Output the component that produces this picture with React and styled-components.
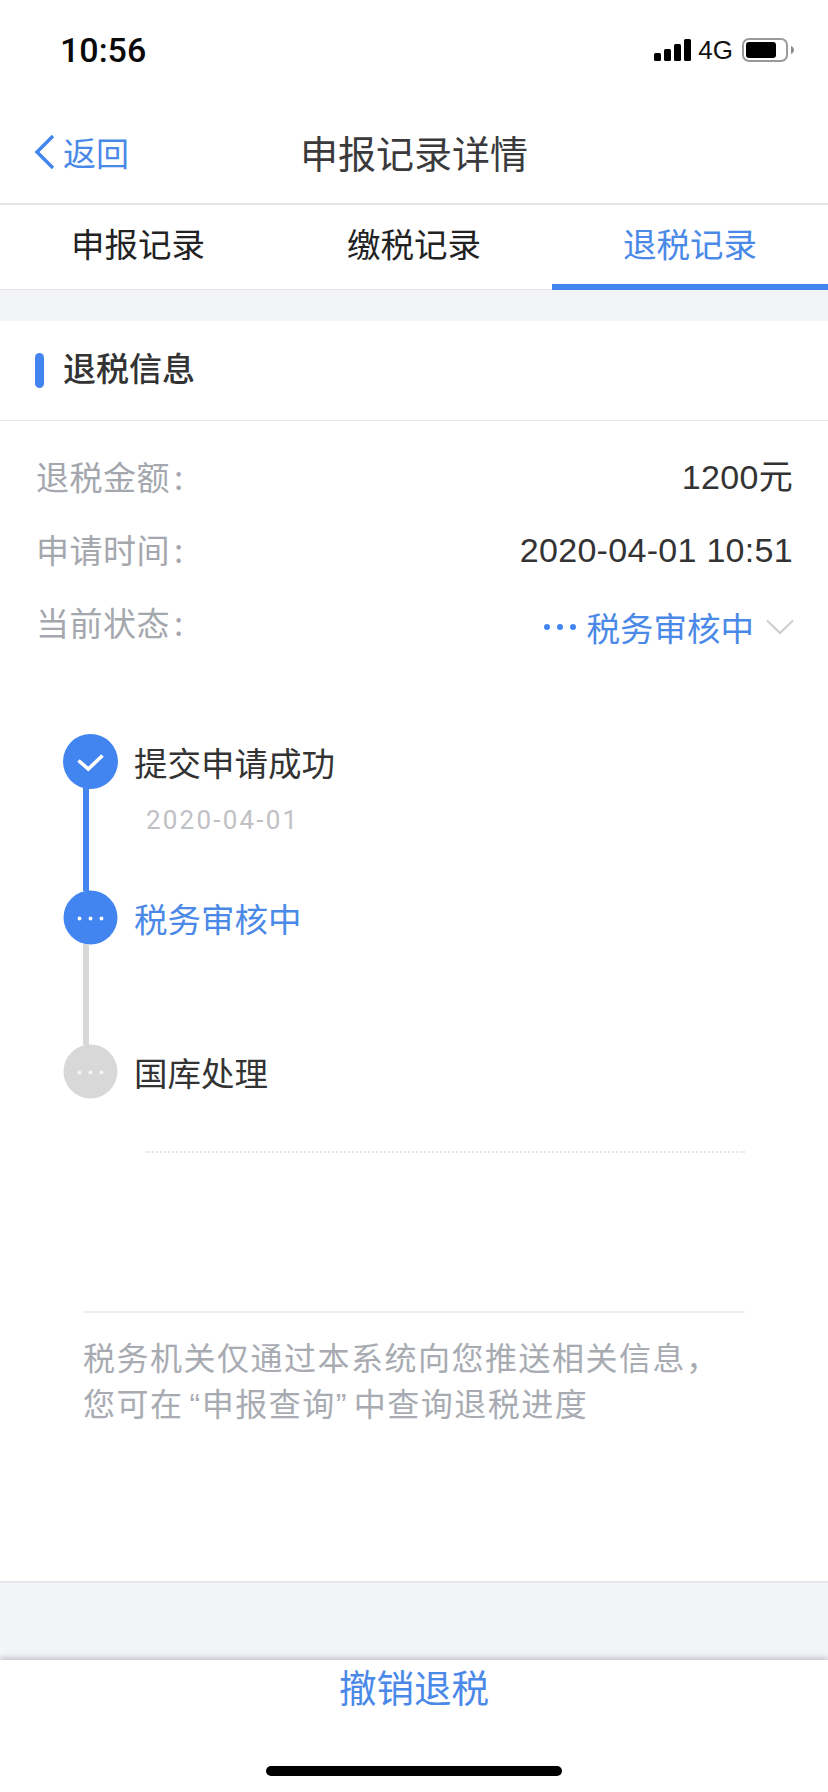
import React from "react";
import styled, { createGlobalStyle } from "styled-components";

const BLUE = "#4285f0";
const TEXT_BLUE = "#4a89e8";
const CJK = `"Noto Sans CJK SC", "Liberation Sans", sans-serif`;
const LATIN = `"Liberation Sans", "Noto Sans CJK SC", sans-serif`;

const GlobalStyle = createGlobalStyle`
  html, body {
    margin: 0;
    padding: 0;
    background: #f3f4f8;
  }
`;

const Page = styled.div`
  width: 828px;
  height: 1792px;
  display: flex;
  flex-direction: column;
  overflow: hidden;
  background: #f3f4f8;
  font-family: ${CJK};
`;

const StatusBar = styled.div`
  height: 100px;
  flex: none;
  display: flex;
  align-items: center;
  justify-content: space-between;
  padding: 0 34px 0 60px;
  background: #fff;
`;

const Time = styled.span`
  font-family: "Roboto", sans-serif;
  font-size: 34px;
  font-weight: 500;
  color: #0a0a0a;
`;

const StatusIcons = styled.div`
  display: flex;
  align-items: center;
`;

const Network = styled.span`
  font-family: ${LATIN};
  font-size: 26px;
  color: #111;
  margin: 0 9px 0 7px;
`;

const NavBar = styled.div`
  height: 103px;
  flex: none;
  display: grid;
  grid-template-columns: 1fr auto 1fr;
  align-items: center;
  padding: 0 0 0 34px;
  background: #fff;
  border-bottom: 2px solid #e4e4e6;
  box-sizing: content-box;
`;

const BackLink = styled.div`
  display: flex;
  align-items: center;
  gap: 8px;
  color: ${TEXT_BLUE};
  font-size: 33px;
  line-height: 40px;
`;

const NavTitle = styled.h1`
  margin: 0 34px 0 0;
  font-size: 38px;
  font-weight: 400;
  line-height: 48px;
  color: #3a3a3c;
`;

const TabBar = styled.div`
  height: 84px;
  flex: none;
  display: grid;
  grid-template-columns: repeat(3, 1fr);
  background: #fff;
  border-bottom: 1px solid #e6e6ea;
`;

const Tab = styled.div`
  display: flex;
  align-items: center;
  justify-content: center;
  padding-bottom: 4px;
  font-size: 33.5px;
  color: ${(p) => (p.$active ? TEXT_BLUE : "#222")};
  border-bottom: 6px solid ${(p) => (p.$active ? BLUE : "transparent")};
  margin-bottom: ${(p) => (p.$active ? "-1px" : "0")};
`;

const Card = styled.section`
  flex: 1;
  margin-top: 31px;
  background: #fff;
  border-bottom: 2px solid #e6e6ea;
`;

const CardHead = styled.div`
  height: 99px;
  display: flex;
  align-items: center;
  gap: 19px;
  padding-left: 35px;
  border-bottom: 1px solid #e8e8ec;
`;

const HeadMark = styled.span`
  width: 9px;
  height: 35px;
  border-radius: 5px;
  background: ${BLUE};
`;

const HeadTitle = styled.h2`
  margin: 0;
  padding-bottom: 7px;
  font-size: 33px;
  font-weight: 500;
  color: #333;
`;

const InfoList = styled.div`
  display: flex;
  flex-direction: column;
  gap: 33px;
  padding: 36px 35px 0 36px;
`;

const InfoRow = styled.div`
  display: flex;
  justify-content: space-between;
  align-items: flex-start;
  line-height: 40px;
`;

const InfoLabel = styled.span`
  margin-top: -1px;
  font-size: 33px;
  letter-spacing: 0.5px;
  color: #a4a7ae;
`;

const Colon = styled.span`
  margin-left: 4px;
`;

const InfoValue = styled.span`
  font-family: ${LATIN};
  font-size: 34px;
  letter-spacing: 0.3px;
  color: #333;
`;

const StatusValue = styled.span`
  display: flex;
  align-items: center;
  padding-top: 4px;
  font-size: 33.5px;
  color: ${TEXT_BLUE};
  margin-right: -1px;
`;

const StatusLabel = styled.span`
  margin: 0 -1px 0 1px;
`;

const Timeline = styled.div`
  margin: 87px 0 0 63px;
  display: flex;
  flex-direction: column;
`;

const Step = styled.div`
  display: flex;
  height: ${(p) => p.$height}px;
`;

const Rail = styled.div`
  width: 55px;
  flex: none;
  display: flex;
  flex-direction: column;
`;

const Node = styled.svg`
  width: 55px;
  height: 55px;
  flex: none;
  display: block;
`;

const Connector = styled.div`
  flex: 1;
  width: 6px;
  margin: -1px 0 -1px 20px;
  background: ${(p) => (p.$done ? BLUE : "#d8d8d8")};
`;

const StepBody = styled.div`
  padding: 8px 0 0 16px;
`;

const StepTitle = styled.div`
  font-size: 33.5px;
  line-height: 40px;
  color: ${(p) => (p.$active ? TEXT_BLUE : "#333")};
`;

const StepDate = styled.div`
  margin: 22px 0 0 12px;
  font-family: "Roboto", sans-serif;
  font-size: 26px;
  line-height: 32px;
  letter-spacing: 2.2px;
  color: #c0c1c5;
`;

const DottedRule = styled.div`
  margin: 52px 83px 0 145px;
  border-top: 2px dotted #e6e6e8;
`;

const Note = styled.div`
  margin: 158px 83px 0 83px;
  padding-top: 23px;
  border-top: 2px solid #ecedf1;
  font-family: ${LATIN};
  font-size: 32px;
  line-height: 46px;
  letter-spacing: 1.5px;
  color: #a8abb2;
  white-space: nowrap;
`;

const Quoted = styled.span`
  margin: 0 6px;
`;

const Footer = styled.div`
  height: 132px;
  flex: none;
  margin-top: 77px;
  position: relative;
  display: flex;
  flex-direction: column;
  align-items: center;
  background: #fff;
  box-shadow: 0 -2px 6px rgba(0, 0, 0, 0.22);
`;

const CancelButton = styled.div`
  margin-top: 2px;
  font-size: 37.5px;
  line-height: 48px;
  color: ${TEXT_BLUE};
`;

const HomeIndicator = styled.div`
  width: 296px;
  height: 10px;
  margin-top: 56px;
  border-radius: 5px;
  background: #000;
`;

function Dots({ fill, opacity }) {
  return (
    <g fill={fill} opacity={opacity}>
      <circle cx="16.5" cy="28.5" r="1.9" />
      <circle cx="27.5" cy="28.5" r="1.9" />
      <circle cx="38.5" cy="28.5" r="1.9" />
    </g>
  );
}

export default function App() {
  return (
    <Page>
      <GlobalStyle />
      <StatusBar>
        <Time>10:56</Time>
        <StatusIcons>
          <svg width="37" height="22" viewBox="0 0 37 22">
            <rect x="0" y="14" width="7" height="8" rx="1.5" fill="#000" />
            <rect x="10" y="10" width="7" height="12" rx="1.5" fill="#000" />
            <rect x="20" y="5" width="7" height="17" rx="1.5" fill="#000" />
            <rect x="30" y="0" width="7" height="22" rx="1.5" fill="#000" />
          </svg>
          <Network>4G</Network>
          <svg width="52" height="24" viewBox="0 0 52 24">
            <rect x="1" y="1" width="44" height="22" rx="6" fill="none" stroke="#9a9a9a" strokeWidth="2" />
            <rect x="4" y="4" width="30" height="16" rx="3" fill="#000" />
            <path d="M49 8 C51 9 52 10.5 52 12 C52 13.5 51 15 49 16 Z" fill="#8a8a8a" />
          </svg>
        </StatusIcons>
      </StatusBar>

      <NavBar>
        <BackLink>
          <svg width="21" height="36" viewBox="0 0 21 36">
            <path d="M19 2 L3 18 L19 34" fill="none" stroke={BLUE} strokeWidth="3.4" />
          </svg>
          <span>返回</span>
        </BackLink>
        <NavTitle>申报记录详情</NavTitle>
      </NavBar>

      <TabBar>
        <Tab>申报记录</Tab>
        <Tab>缴税记录</Tab>
        <Tab $active>退税记录</Tab>
      </TabBar>

      <Card>
        <CardHead>
          <HeadMark />
          <HeadTitle>退税信息</HeadTitle>
        </CardHead>

        <InfoList>
          <InfoRow>
            <InfoLabel>退税金额<Colon>:</Colon></InfoLabel>
            <InfoValue>1200元</InfoValue>
          </InfoRow>
          <InfoRow>
            <InfoLabel>申请时间<Colon>:</Colon></InfoLabel>
            <InfoValue>2020-04-01 10:51</InfoValue>
          </InfoRow>
          <InfoRow>
            <InfoLabel>当前状态<Colon>:</Colon></InfoLabel>
            <StatusValue>
              <svg width="43" height="10" viewBox="0 0 43 10">
                <circle cx="4" cy="5" r="3" fill={BLUE} />
                <circle cx="17" cy="5" r="3" fill={BLUE} />
                <circle cx="30" cy="5" r="3" fill={BLUE} />
              </svg>
              <StatusLabel>税务审核中</StatusLabel>
              <svg width="41" height="16" viewBox="0 0 41 16">
                <path d="M14 1.5 L27 14 L40 1.5" fill="none" stroke="#cdcdcf" strokeWidth="2" />
              </svg>
            </StatusValue>
          </InfoRow>
        </InfoList>

        <Timeline>
          <Step $height={156}>
            <Rail>
              <Node viewBox="0 0 55 55">
                <circle cx="27.5" cy="27.5" r="27.5" fill={BLUE} />
                <path d="M15.5 26.5 L25.3 35 L39.5 21.5" fill="none" stroke="#fff" strokeWidth="3.6" />
              </Node>
              <Connector $done />
            </Rail>
            <StepBody>
              <StepTitle>提交申请成功</StepTitle>
              <StepDate>2020-04-01</StepDate>
            </StepBody>
          </Step>
          <Step $height={154}>
            <Rail>
              <Node viewBox="0 0 55 55">
                <circle cx="27.5" cy="27.5" r="27" fill={BLUE} />
                <Dots fill="#fff" />
              </Node>
              <Connector />
            </Rail>
            <StepBody>
              <StepTitle $active>税务审核中</StepTitle>
            </StepBody>
          </Step>
          <Step $height={55}>
            <Rail>
              <Node viewBox="0 0 55 55">
                <circle cx="27.5" cy="27.5" r="27" fill="#d8d8d8" />
                <Dots fill="#fff" opacity="0.75" />
              </Node>
            </Rail>
            <StepBody>
              <StepTitle>国库处理</StepTitle>
            </StepBody>
          </Step>
        </Timeline>

        <DottedRule />
        <Note>
          税务机关仅通过本系统向您推送相关信息，
          <br />
          您可在<Quoted>“申报查询”</Quoted>中查询退税进度
        </Note>
      </Card>

      <Footer>
        <CancelButton>撤销退税</CancelButton>
        <HomeIndicator />
      </Footer>
    </Page>
  );
}
